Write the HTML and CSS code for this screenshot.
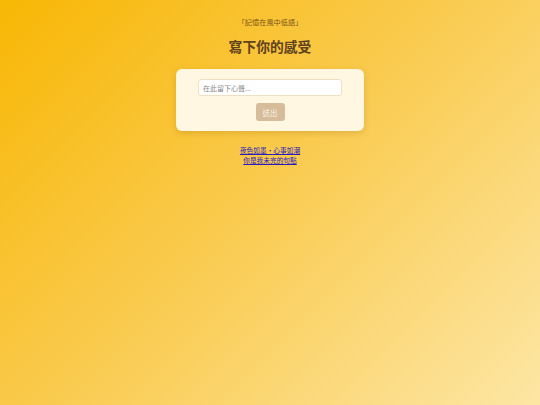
FILE: index.html
```html
<!DOCTYPE html>
<html lang="zh-Hant">
<head>
<meta charset="utf-8">
<link rel="stylesheet" href="styles.css">
</head>
<body>
<main class="page">
  <p class="whisper">「記憶在風中低語」</p>
  <h1 class="title">寫下你的感受</h1>
  <form class="card">
    <input class="field" type="text" placeholder="在此留下心聲...">
    <button class="send" type="button">送出</button>
  </form>
  <nav class="links">
    <a href="#a">夜色如墨・心事如潮</a>
    <a href="#b">你是我未完的句點</a>
  </nav>
</main>
</body>
</html>
```
FILE: styles.css
```css
html, body {
  margin: 0;
  height: 100%;
}
body {
  background: linear-gradient(135deg, #f8b704 0%, #f9c94a 45%, #fde6a4 100%);
  font-family: "Noto Sans CJK TC", "Noto Sans CJK SC", sans-serif;
}
.page {
  display: flex;
  flex-direction: column;
  align-items: center;
  padding-top: 17px;
}
.whisper {
  margin: 0;
  font-size: 7.2px;
  line-height: 10px;
  color: #7a5618;
}
.title {
  margin: 10px 0 0;
  font-size: 13.8px;
  line-height: 19px;
  font-weight: 700;
  color: #5f4220;
}
.card {
  margin-top: 13px;
  width: 188px;
  box-sizing: border-box;
  padding: 10px 22px;
  background: #fff7e2;
  border-radius: 6px;
  box-shadow: 0 2px 6px rgba(150, 100, 20, 0.25);
  display: flex;
  flex-direction: column;
  align-items: center;
  gap: 7px;
}
.field {
  width: 144px;
  height: 17px;
  box-sizing: border-box;
  border: 1px solid #efe0c2;
  border-radius: 3px;
  background: #fff;
  padding: 0 4px;
  font-family: inherit;
  font-size: 7px;
  color: #555;
  outline: none;
}
.field::placeholder {
  color: #8a8a8a;
}
.send {
  width: 29px;
  height: 18px;
  border: none;
  border-radius: 3px;
  background: #d6bc9b;
  color: #fbf1e4;
  font-family: inherit;
  font-size: 7.5px;
  padding: 0;
}
.links {
  margin-top: 14px;
  display: flex;
  flex-direction: column;
  align-items: center;
  font-size: 6.7px;
  line-height: 10px;
}
.links a {
  color: #2a1bbf;
}
```
